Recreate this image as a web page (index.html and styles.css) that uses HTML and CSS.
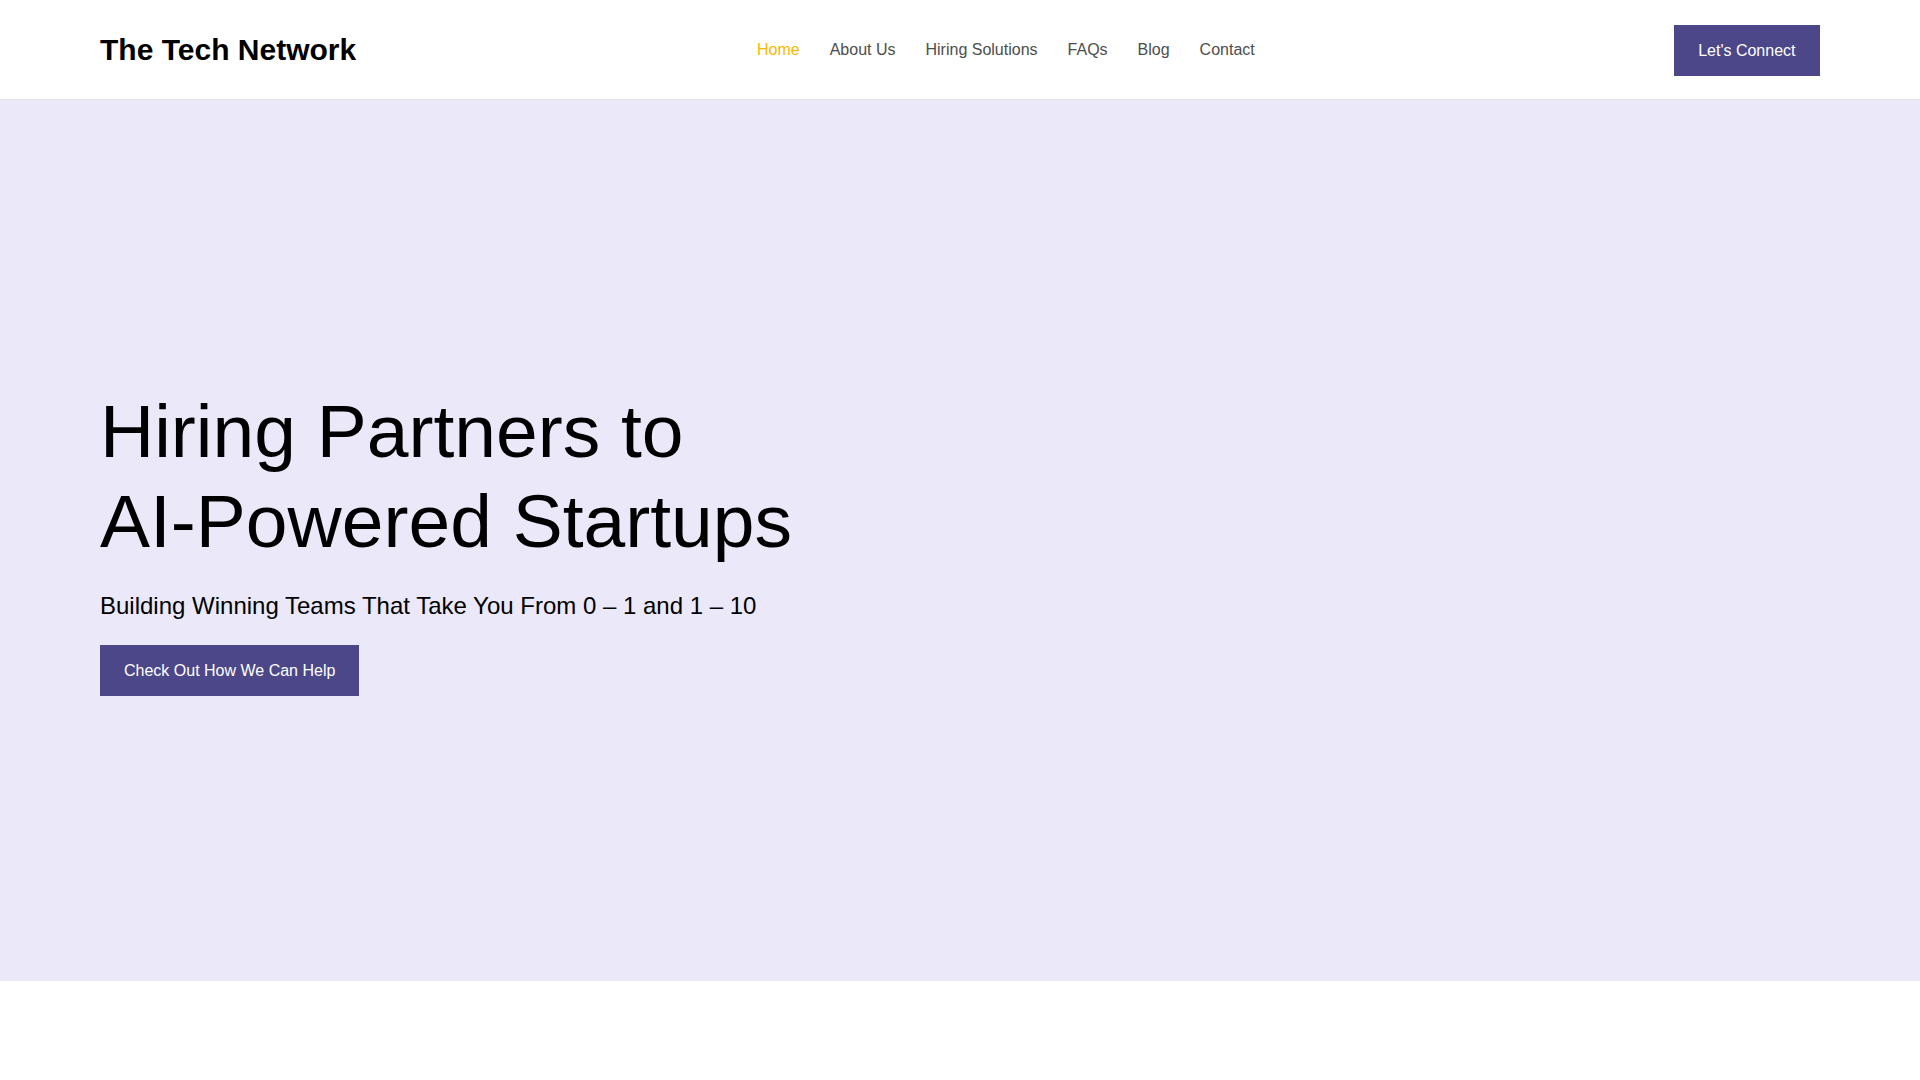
FILE: index.html
```html
<!DOCTYPE html>
<html lang="en">
<head>
<meta charset="utf-8">
<title>The Tech Network</title>
<link rel="stylesheet" href="styles.css">
</head>
<body>
<header class="site-header">
  <div class="header-inner">
    <div class="logo">The Tech Network</div>
    <nav class="main-nav">
      <a class="nav-link active" href="#">Home</a>
      <a class="nav-link" href="#">About Us</a>
      <a class="nav-link" href="#">Hiring Solutions</a>
      <a class="nav-link" href="#">FAQs</a>
      <a class="nav-link" href="#">Blog</a>
      <a class="nav-link" href="#">Contact</a>
    </nav>
    <div class="header-cta">
      <a class="btn btn-header" href="#">Let's Connect</a>
    </div>
  </div>
</header>
<section class="hero">
  <div class="hero-inner">
    <h1 class="hero-title">Hiring Partners to<br>AI-Powered Startups</h1>
    <p class="hero-sub">Building Winning Teams That Take You From 0 – 1 and 1 – 10</p>
    <a class="btn" href="#">Check Out How We Can Help</a>
  </div>
</section>
</body>
</html>
```
FILE: styles.css
```css
* { box-sizing: border-box; }
html, body { margin: 0; padding: 0; }
body {
  font-family: "Liberation Sans", Arial, sans-serif;
  background: #ffffff;
  color: #000000;
}
a { text-decoration: none; }

.site-header {
  height: 100px;
  border-bottom: 1px solid #e4e4e4;
  background: #ffffff;
}
.header-inner {
  height: 99px;
  padding: 0 100px;
  display: grid;
  grid-template-columns: 642px auto 1fr;
  align-items: center;
}
.logo {
  font-size: 30px;
  font-weight: 700;
  line-height: 36px;
  color: #000000;
}
.main-nav {
  display: flex;
  align-items: center;
}
.nav-link {
  font-size: 16px;
  line-height: 20px;
  padding: 0 15px;
  color: #4d4d4d;
}
.nav-link.active { color: #fbb800; }
.header-cta {
  display: flex;
  justify-content: flex-end;
  padding-top: 2px;
}
.btn {
  display: inline-block;
  background: #4c4789;
  color: #ffffff;
  font-size: 16px;
  line-height: 19px;
  padding: 16px 24px;
}
.btn-header {
  padding: 16px 24.5px;
}

.hero {
  background: #ebe8f9;
  height: 881px;
  display: flex;
  align-items: center;
}
.hero-inner {
  padding: 0 100px;
  display: flex;
  flex-direction: column;
  align-items: flex-start;
}
.hero-title {
  margin: 0;
  font-size: 75px;
  font-weight: 400;
  line-height: 90px;
  color: #000000;
}
.hero-sub {
  margin: 25px 0 25px;
  font-size: 24px;
  line-height: 29px;
  color: #000000;
}
```
